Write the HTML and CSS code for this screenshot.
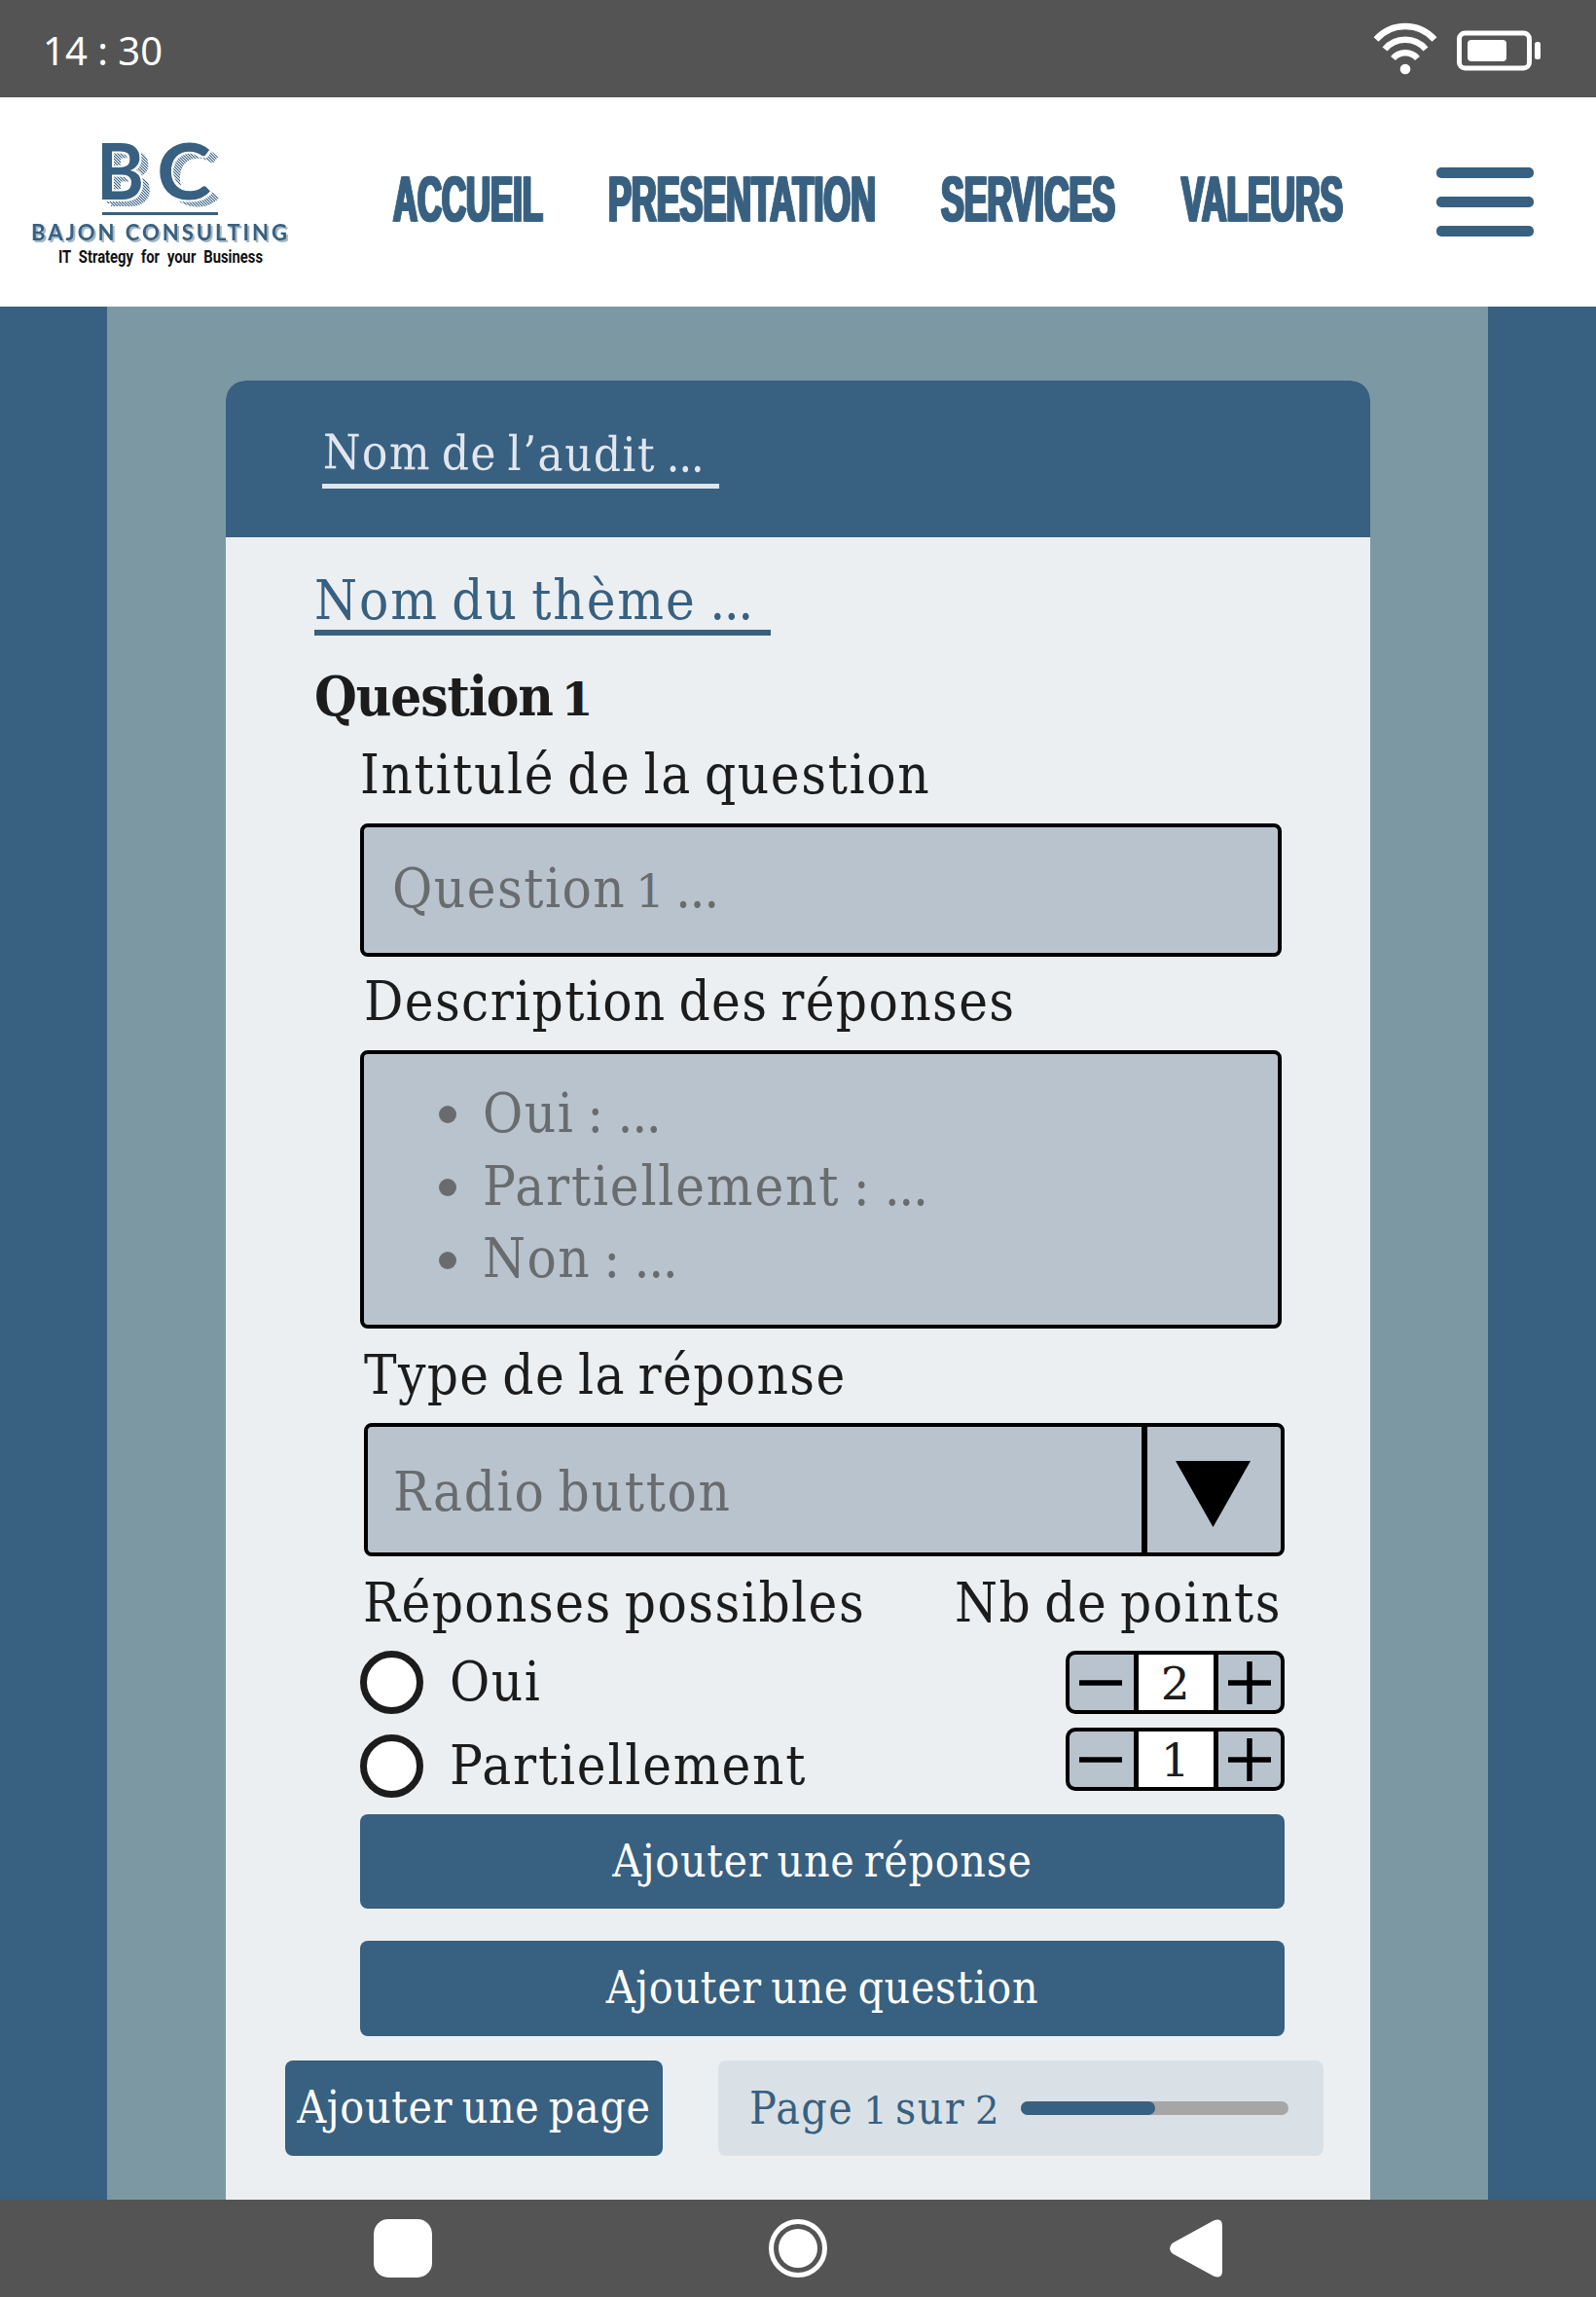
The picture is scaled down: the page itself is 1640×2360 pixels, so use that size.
FILE: index.html
```html
<!DOCTYPE html>
<html lang="fr">
<head>
<meta charset="utf-8">
<title>Bajon Consulting</title>
<link rel="stylesheet" href="styles.css">
</head>
<body>
<div class="screen">
  <div class="status">
    <span class="clock">14 : 30</span>
    <div class="status-icons">
      <svg class="wifi" width="66" height="54" viewBox="0 0 66 54" fill="none" stroke="#fff" stroke-width="6.5">
        <path d="M3 17.500A40 40 0 0 1 63 17.500"/>
        <path d="M12 27.500A27.500 27.500 0 0 1 54 27.500"/>
        <path d="M20.500 37A16.500 16.500 0 0 1 45.500 37"/>
        <circle cx="33" cy="48" r="5.300" fill="#fff" stroke="none"/>
      </svg>
      <svg class="battery" width="87" height="42" viewBox="0 0 87 42">
        <rect x="2.500" y="3" width="72" height="36" rx="6" fill="none" stroke="#fff" stroke-width="5"/>
        <rect x="11" y="10" width="40" height="22" rx="4" fill="#fff"/>
        <rect x="80" y="12" width="6" height="18" rx="2.500" fill="#fff"/>
      </svg>
    </div>
  </div>

  <header class="topbar">
    <svg class="logo" width="290" height="155" viewBox="0 0 290 155">
      <defs>
        <!-- hatched drop shade, separated from the letter by a thin gap -->
        <filter id="shade" filterUnits="userSpaceOnUse" x="70" y="6" width="150" height="84" color-interpolation-filters="sRGB">
          <feFlood x="70" y="6" width="1" height="1" flood-color="#386080" result="a"/>
          <feFlood x="71" y="7" width="1" height="1" flood-color="#386080" result="b"/>
          <feFlood x="72" y="8" width="1" height="1" flood-color="#386080" result="c"/>
          <feFlood x="70" y="6" width="3" height="3" flood-color="#386080" flood-opacity="0.25" result="d"/>
          <feMerge x="70" y="6" width="3" height="3" result="cell">
            <feMergeNode in="d"/><feMergeNode in="a"/><feMergeNode in="b"/><feMergeNode in="c"/>
          </feMerge>
          <feTile in="cell" result="hatch"/>
          <feOffset in="SourceAlpha" dx="5" dy="4" result="s1"/>
          <feOffset in="SourceAlpha" dx="9" dy="7" result="s2"/>
          <feMerge result="s"><feMergeNode in="s1"/><feMergeNode in="s2"/></feMerge>
          <feComposite in="hatch" in2="s" operator="in" result="h"/>
          <feMorphology in="SourceAlpha" operator="dilate" radius="1.500" result="edge"/>
          <feComposite in="h" in2="edge" operator="out" result="cut"/>
          <feMerge><feMergeNode in="cut"/><feMergeNode in="SourceGraphic"/></feMerge>
        </filter>
      </defs>
      <g class="mono" filter="url(#shade)">
        <text x="79" y="75" textLength="49" lengthAdjust="spacingAndGlyphs">B</text>
        <text x="141" y="75" textLength="56" lengthAdjust="spacingAndGlyphs">C</text>
      </g>
      <rect x="85" y="88" width="119" height="3" fill="#386080"/>
      <text class="brand" x="12" y="117" textLength="263">BAJON CONSULTING</text>
      <text class="tagline" transform="translate(40 140) scale(1 1.25)" textLength="210" lengthAdjust="spacingAndGlyphs">IT Strategy for your Business</text>
    </svg>
    <nav class="nav">
      <svg width="157" height="60"><text transform="translate(1 55) scale(1 1.75)" textLength="154" lengthAdjust="spacingAndGlyphs">ACCUEIL</text></svg>
      <svg width="276" height="60"><text transform="translate(-1 55) scale(1 1.75)" textLength="275" lengthAdjust="spacingAndGlyphs">PRESENTATION</text></svg>
      <svg width="180" height="60"><text transform="translate(-1 55) scale(1 1.75)" textLength="179" lengthAdjust="spacingAndGlyphs">SERVICES</text></svg>
      <svg width="168" height="60"><text transform="translate(0 55) scale(1 1.75)" textLength="166" lengthAdjust="spacingAndGlyphs">VALEURS</text></svg>
    </nav>
    <div class="burger"><i></i><i></i><i></i></div>
  </header>

  <main class="backdrop">
    <section class="card">
      <div class="card-head">
        <div class="audit"><span>Nom de l’audit <span class="dots">...</span></span></div>
      </div>
      <div class="card-body">
        <div class="theme">Nom du thème <span class="dots">...</span></div>
        <h2 class="question">Question <span class="num">1</span></h2>
        <div class="form">
          <div class="label l-title">Intitulé de la question</div>
          <div class="field">Question <span class="num">1</span> <span class="dots">...</span></div>
          <div class="label l-desc">Description des réponses</div>
          <ul class="area">
            <li><span>Oui : <span class="dots">...</span></span></li>
            <li class="wide"><span>Partiellement : <span class="dots">...</span></span></li>
            <li><span>Non : <span class="dots">...</span></span></li>
          </ul>
          <div class="label l-type">Type de la réponse</div>
          <div class="select">
            <span class="select-value">Radio button</span>
            <span class="select-arrow"><svg width="77" height="68"><path d="M0 0H77L38.500 68Z"/></svg></span>
          </div>
          <div class="columns">
            <span class="c-answers">Réponses possibles</span>
            <span class="c-points">Nb de points</span>
          </div>
          <div class="answers">
            <div class="options">
              <div class="option"><i class="radio"></i><span>Oui</span></div>
              <div class="option wide"><i class="radio"></i><span>Partiellement</span></div>
            </div>
            <div class="steppers">
              <div class="stepper">
                <span class="step minus"><svg width="44" height="44"><path d="M0 22H44"/></svg></span>
                <span class="value">2</span>
                <span class="step"><svg width="44" height="44"><path d="M0 22H44M22 0V44"/></svg></span>
              </div>
              <div class="stepper">
                <span class="step minus"><svg width="44" height="44"><path d="M0 22H44"/></svg></span>
                <span class="value">1</span>
                <span class="step"><svg width="44" height="44"><path d="M0 22H44M22 0V44"/></svg></span>
              </div>
            </div>
          </div>
          <div class="btn b-answer">Ajouter une réponse</div>
          <div class="btn b-question">Ajouter une question</div>
        </div>
        <div class="pager">
          <div class="btn b-page">Ajouter une page</div>
          <div class="pill">
            <span class="page-text">Page <span class="num">1</span> sur <span class="num">2</span></span>
            <div class="progress"><div class="bar" style="width:50%"></div></div>
          </div>
        </div>
      </div>
    </section>
  </main>

  <div class="navbar">
    <svg width="60" height="60"><rect width="60" height="60" rx="15" fill="#fff"/></svg>
    <svg width="60" height="60"><circle cx="30" cy="30" r="27.500" fill="none" stroke="#fff" stroke-width="5"/><circle cx="30" cy="30" r="20" fill="#fff"/></svg>
    <svg class="back" width="54" height="60"><path d="M3 24.500L45 1.500Q54 -2 54 7V53Q54 62 45 58.500L3 35.500Q-3 30 3 24.500Z" fill="#fff"/></svg>
  </div>
</div>
</body>
</html>
```
FILE: styles.css
```css
* { box-sizing: border-box; }
body { margin: 0; }
svg { display: block; }

.screen {
  width: 1640px;
  height: 2360px;
  display: flex;
  flex-direction: column;
  overflow: hidden;
  background: #386080;
  color: #1c1c1c;
  font-family: "DejaVu Serif Condensed", "DejaVu Serif", serif;
  font-stretch: condensed;
  font-size: 56px;
  line-height: 60px;
  letter-spacing: 1.45px;
  word-spacing: -4.5px;
  white-space: nowrap;
}

.status {
  height: 100px;
  flex: none;
  display: flex;
  align-items: center;
  justify-content: space-between;
  padding: 3px 56px 0 44px;
  background: #545454;
  color: #fff;
}
.clock { font: 40px/50px "Noto Sans", sans-serif; letter-spacing: 0; word-spacing: 0; }
.status-icons { display: flex; align-items: center; gap: 20px; }
.wifi { margin-top: -3px; }

.topbar {
  height: 215px;
  flex: none;
  display: flex;
  align-items: center;
  background: #fff;
  padding-left: 20px;
  letter-spacing: 0;
  word-spacing: 0;
}
.logo { overflow: visible; }
.mono { font: 700 81px Lato, sans-serif; fill: #386080; }
.brand {
  font: 700 22px Lato, sans-serif;
  fill: #386080;
  filter: drop-shadow(2px 2px 0 #a3b8c8);
}
.tagline { font: 700 14px Roboto, sans-serif; word-spacing: 4px; fill: #111; }
.nav { display: flex; gap: 66px; margin-left: 92px; margin-top: -11px; }
.nav svg { overflow: visible; filter: drop-shadow(2px 0 0 #386080); }
.nav text {
  font: 700 37px "Liberation Sans", sans-serif;
  fill: #386080;
  stroke: #386080;
  stroke-width: 0.8px;
}
.burger { display: flex; flex-direction: column; gap: 19.5px; margin-left: 95px; }
.burger i { width: 100px; height: 10.5px; border-radius: 5px; background: #386080; }

.backdrop {
  height: 1945px;
  flex: none;
  margin: 0 111px 0 110px;
  padding: 76px 121px 0 122px;
  background: #7c98a3;
}
.card {
  height: 1869px;
  background: #ebeff2;
  border-radius: 20px 20px 0 0;
  overflow: hidden;
}
.card-head {
  height: 161px;
  padding: 49px 0 0 99px;
  background: #386080;
  color: #e1e6ee;
}
.audit {
  width: 408px;
  padding: 0 0 3px 1px;
  border-bottom: 5px solid #e1e6ee;
  font-size: 49px;
  line-height: 54px;
  letter-spacing: 1.35px;
}
.audit > span { display: inline-block; transform: rotate(0.5deg); }
.card-body { padding: 35px 48px 0 61px; }
.theme {
  width: 469px;
  margin-left: 30px;
  height: 66px;
  border-bottom: 6px solid #386080;
  color: #386080;
  letter-spacing: 1.9px;
}
.question { margin: 32px 0 0 30px; font-size: 56px; font-weight: 700; letter-spacing: -1.1px; }
.num {
  margin-left: -3px;
  font-family: "DejaVu Serif", serif;
  font-stretch: normal;
  font-size: 0.84em;
  line-height: 0;
  letter-spacing: -2px;
}
.dots { letter-spacing: -1.4px; }

.form { margin: 21px 40px 0 77px; }
.field, .area, .select {
  border: 4px solid #000;
  border-radius: 8px;
  background: #b9c3cd;
  color: #696c6f;
}
.label { padding-left: 4px; }
.l-title { padding-left: 0; letter-spacing: 1.6px; }
.l-desc, .l-type { letter-spacing: 1.35px; }
.field { width: 947px; height: 137px; margin: 20px 0 16px; padding: 33px 0 0 29px; }
.area {
  width: 947px;
  height: 286px;
  margin: 20px 0 18px;
  padding: 24px 0 0 123px;
  line-height: 74.7px;
  list-style: none;
}
.area li { display: flex; align-items: center; }
.area li::before {
  content: "";
  width: 18px;
  height: 18px;
  margin: 2px 27px 0 -46px;
  border-radius: 50%;
  background: #696c6f;
}
.select { display: flex; height: 137px; margin: 19px 0 18px 4px; }
.select-value { flex: 1; padding: 37px 0 0 26px; letter-spacing: 1.7px; }
.select-arrow {
  width: 143px;
  border-left: 6px solid #000;
  padding: 35px 0 0 29px;
}
.columns { display: flex; justify-content: space-between; padding: 0 3px 0 3px; }
.answers { display: flex; justify-content: space-between; margin-top: 19px; }
.options { display: flex; flex-direction: column; gap: 21px; }
.option { display: flex; align-items: center; gap: 27px; height: 65px; }
.option span { padding-bottom: 2px; }
.area .wide, .wide { letter-spacing: 1.8px; }
.radio {
  width: 65px;
  height: 65px;
  border: 7px solid #1c1c1c;
  border-radius: 50%;
  background: #fff;
}
.steppers { display: flex; flex-direction: column; gap: 14px; }
.stepper {
  display: flex;
  width: 225px;
  height: 65px;
  border: 4px solid #000;
  border-radius: 10px;
  background: #b9c3cd;
}
.step { flex: 1; display: flex; align-items: center; justify-content: center; }
.minus { padding-right: 2px; }
.step path { stroke: #000; stroke-width: 5.5; }
.value {
  width: 87px;
  border: solid #000;
  border-width: 0 5px;
  background: #fff;
  font-family: "DejaVu Serif", serif;
  font-stretch: normal;
  font-size: 47px;
  line-height: 59px;
  text-align: center;
}
.btn {
  display: flex;
  align-items: center;
  justify-content: center;
  height: 98px;
  padding-bottom: 2px;
  border-radius: 8px;
  background: #386080;
  color: #fff;
  font-size: 46px;
  letter-spacing: 0.7px;
}
.b-answer { margin-top: 17px; height: 97px; }
.b-question { margin-top: 33px; }
.pager { display: flex; gap: 57px; margin-top: 25px; }
.b-page { width: 388px; }
.pill {
  width: 622px;
  height: 98px;
  display: flex;
  align-items: center;
  justify-content: space-between;
  padding: 0 36px 0 32px;
  border-radius: 8px;
  background: #d9e1e7;
  color: #386080;
  font-size: 46px;
}
.pill .num { margin-left: 0; }
.page-text { padding-bottom: 1px; }
.progress { width: 275px; height: 14px; border-radius: 7px; background: #a6a6a6; }
.bar { height: 14px; border-radius: 7px; background: #386080; }

.navbar {
  height: 100px;
  flex: none;
  display: flex;
  align-items: center;
  gap: 346px;
  padding-left: 384px;
  background: #545454;
}
.back { margin-left: 6px; }
```
